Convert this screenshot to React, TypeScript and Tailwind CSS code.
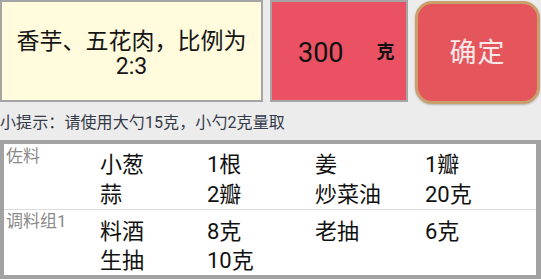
import React from "react";

const font = { fontFamily: "Roboto, 'Noto Sans CJK SC', sans-serif" };

type Item = [string, string];
const groups: { label: string; rows: Item[][] }[] = [
  {
    label: "佐料",
    rows: [
      [["小葱", "1根"], ["姜", "1瓣"]],
      [["蒜", "2瓣"], ["炒菜油", "20克"]],
    ],
  },
  {
    label: "调料组1",
    rows: [
      [["料酒", "8克"], ["老抽", "6克"]],
      [["生抽", "10克"]],
    ],
  },
];

export default function App() {
  return (
    <div className="w-[541px] h-[279px] bg-[#ececec] overflow-hidden" style={font}>
      {/* Top row */}
      <div className="flex items-start h-[105px]">
        <div className="w-[263px] h-[102px] border-2 border-[#a5a5a5] bg-[#fffbdc] flex flex-col items-center justify-center text-[23px] leading-[25px] text-[#151515] pt-[5px]">
          <span>香芋、五花肉，比例为</span>
          <span>2:3</span>
        </div>
        <div className="ml-[7px] w-[138px] h-[102px] border-2 border-[#a5a5a5] bg-[#ea5163] flex items-center pt-[4px]">
          <span className="ml-[26px] text-[27px] text-[#111]">300</span>
          <span className="ml-[33px] -mt-[3px] text-[18px] font-bold text-[#111]">克</span>
        </div>
        <div className="ml-[7px] mt-[1px] w-[125px] h-[103px] rounded-[17px] border-[3px] border-[#c9a06c] bg-[#e5555c] shadow-[0_1px_2px_rgba(0,0,0,0.25)] flex items-center justify-center pt-[2px]">
          <span className="text-[27px] text-[#fbe9ea] tracking-[1px]">确定</span>
        </div>
      </div>

      {/* Hint */}
      <div className="h-[35px] flex items-center text-[16px] text-[#333a48] tracking-[0.1px]">
        小提示：请使用大勺15克，小勺2克量取
      </div>

      {/* Ingredient table */}
      <div className="h-[139px] border-4 border-r-[5px] border-[#a2a2a2] bg-white">
        {groups.map((g, gi) => (
          <div
            key={g.label}
            className={`flex ${gi === 0 ? "border-b border-[#dcdcdc] pb-[1px]" : ""}`}
          >
            <div className={`w-[96px] pl-[2px] text-[17px] leading-[22px] text-[#8a8a8a] ${gi === 0 ? "pt-[1px]" : "pt-0"}`}>
              {g.label}
            </div>
            <div className={`flex-1 ${gi === 0 ? "pt-[4px]" : "pt-[5px]"}`}>
              {g.rows.map((row, ri) => (
                <div
                  key={ri}
                  className={`grid grid-cols-[107px_108px_110px_1fr] items-center text-[22px] text-[#111] ${gi === 0 ? "h-[30px]" : "h-[29px]"}`}
                >
                  {row.flatMap(([name, qty]) => [
                    <span key={name}>{name}</span>,
                    <span key={name + "q"}>{qty}</span>,
                  ])}
                </div>
              ))}
            </div>
          </div>
        ))}
      </div>
    </div>
  );
}
